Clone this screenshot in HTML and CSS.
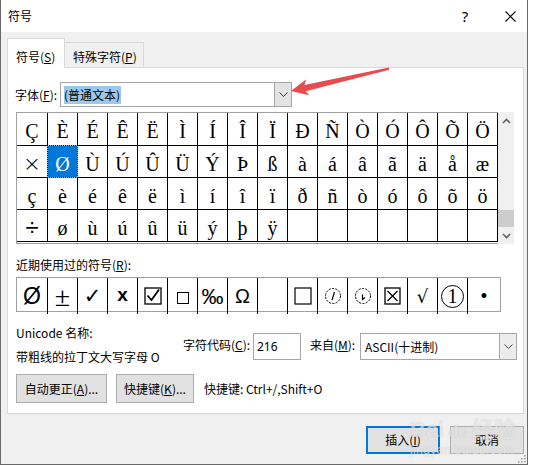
FILE: index.html
```html
<!DOCTYPE html>
<html lang="zh-CN">
<head>
<meta charset="utf-8">
<title>符号</title>
<link rel="stylesheet" href="styles.css">
</head>
<body>
<div class="window">
  <div class="titlebar">
    <span class="title">符号</span>
    <span class="tb-help">?</span>
    <span class="tb-close"><svg width="11" height="11" viewBox="0 0 11 11"><path d="M0.5 0.5L10.5 10.5M10.5 0.5L0.5 10.5" stroke="#000" stroke-width="1.1" fill="none"/></svg></span>
  </div>
  <div class="tabs">
    <div class="tab active">符号(<u>S</u>)</div>
    <div class="tab">特殊字符(<u>P</u>)</div>
  </div>
  <div class="panel">
    <div class="font-row">
      <span class="font-label">字体(<u>F</u>):</span>
      <div class="combo font-combo">
        <span class="combo-text"><span class="hl">(普通文本)</span></span>
        <span class="combo-btn dark"><svg width="9" height="5" viewBox="0 0 9 5"><path d="M0.5 0.5L4.5 4.5L8.5 0.5" stroke="#333" fill="none"/></svg></span>
      </div>
    </div>

    <div class="charmap">
      <div class="cells">
        <div class="cell">Ç</div><div class="cell">È</div><div class="cell">É</div><div class="cell">Ê</div><div class="cell">Ë</div><div class="cell">Ì</div><div class="cell">Í</div><div class="cell">Î</div><div class="cell">Ï</div><div class="cell">Ð</div><div class="cell">Ñ</div><div class="cell">Ò</div><div class="cell">Ó</div><div class="cell">Ô</div><div class="cell">Õ</div><div class="cell">Ö</div>
        <div class="cell times">×</div><div class="cell sel">Ø</div><div class="cell">Ù</div><div class="cell">Ú</div><div class="cell">Û</div><div class="cell">Ü</div><div class="cell">Ý</div><div class="cell">Þ</div><div class="cell">ß</div><div class="cell">à</div><div class="cell">á</div><div class="cell">â</div><div class="cell">ã</div><div class="cell">ä</div><div class="cell">å</div><div class="cell">æ</div>
        <div class="cell">ç</div><div class="cell">è</div><div class="cell">é</div><div class="cell">ê</div><div class="cell">ë</div><div class="cell">ì</div><div class="cell">í</div><div class="cell">î</div><div class="cell">ï</div><div class="cell">ð</div><div class="cell">ñ</div><div class="cell">ò</div><div class="cell">ó</div><div class="cell">ô</div><div class="cell">õ</div><div class="cell">ö</div>
        <div class="cell divide">÷</div><div class="cell">ø</div><div class="cell">ù</div><div class="cell">ú</div><div class="cell">û</div><div class="cell">ü</div><div class="cell">ý</div><div class="cell">þ</div><div class="cell">ÿ</div><div class="cell"></div><div class="cell"></div><div class="cell"></div><div class="cell"></div><div class="cell"></div><div class="cell"></div><div class="cell"></div>
      </div>
      <div class="vscroll">
        <div class="sb-btn"><svg width="9" height="6" viewBox="0 0 9 6"><path d="M1 5L4.5 1.5L8 5" stroke="#606060" stroke-width="1.6" fill="none"/></svg></div>
        <div class="sb-track"><div class="sb-thumb"></div></div>
        <div class="sb-btn"><svg width="9" height="6" viewBox="0 0 9 6"><path d="M1 1L4.5 4.5L8 1" stroke="#606060" stroke-width="1.6" fill="none"/></svg></div>
      </div>
    </div>

    <div class="recent-label">近期使用过的符号(<u>R</u>):</div>
    <div class="recent">
      <div class="rc r-oslash">Ø</div>
      <div class="rc r-pm">±</div>
      <div class="rc r-check">✓</div>
      <div class="rc r-x">x</div>
      <div class="rc"><svg width="18" height="18" viewBox="0 0 18 18"><rect x="1" y="1" width="16" height="16" fill="none" stroke="#000" stroke-width="1.3"/><path d="M3.5 8.5L7.5 13L15 2.5" stroke="#000" stroke-width="1.8" fill="none"/></svg></div>
      <div class="rc"><svg width="12" height="12" viewBox="0 0 12 12" class="low"><rect x="0.5" y="0.5" width="11" height="11" fill="none" stroke="#000" stroke-width="1"/></svg></div>
      <div class="rc r-permil">‰</div>
      <div class="rc r-omega">Ω</div>
      <div class="rc"></div>
      <div class="rc"><svg width="18" height="18" viewBox="0 0 18 18"><rect x="1" y="1" width="16" height="16" fill="none" stroke="#000" stroke-width="1.2"/></svg></div>
      <div class="rc"><svg width="18" height="18" viewBox="0 0 18 18"><circle cx="9" cy="9" r="7.5" fill="none" stroke="#000" stroke-width="1" stroke-dasharray="2.2 1.2"/><path d="M8 13L10.5 5" stroke="#000" stroke-width="1.2" fill="none"/></svg></div>
      <div class="rc"><svg width="18" height="18" viewBox="0 0 18 18"><circle cx="9" cy="9" r="7.5" fill="none" stroke="#000" stroke-width="1" stroke-dasharray="2.2 1.2"/><path d="M8.5 7.5V12.5L11 10.5" stroke="#000" stroke-width="1.2" fill="none"/></svg></div>
      <div class="rc"><svg width="17" height="18" viewBox="0 0 17 18"><rect x="1" y="1" width="15" height="16" fill="none" stroke="#000" stroke-width="1.3"/><path d="M3.5 4L13.5 14M13.5 4L3.5 14" stroke="#000" stroke-width="1.2" fill="none"/></svg></div>
      <div class="rc r-sqrt">√</div>
      <div class="rc"><span class="circled">1</span></div>
      <div class="rc r-bullet">•</div>
    </div>

    <div class="info">
      <div class="info-left">
        <div class="line">Unicode 名称:</div>
        <div class="line second">带粗线的拉丁文大写字母 O</div>
      </div>
      <span class="info-label code-label">字符代码(<u>C</u>):</span>
      <div class="textbox">216</div>
      <span class="info-label from-label">来自(<u>M</u>):</span>
      <div class="combo from-combo">
        <span class="combo-text">ASCII(十进制)</span>
        <span class="combo-btn"><svg width="9" height="5" viewBox="0 0 9 5"><path d="M0.5 0.5L4.5 4.5L8.5 0.5" stroke="#444" fill="none"/></svg></span>
      </div>
    </div>

    <div class="btn-row">
      <div class="btn autocorrect">自动更正(<u>A</u>)...</div>
      <div class="btn shortcut">快捷键(<u>K</u>)...</div>
      <span class="shortcut-text">快捷键: Ctrl+/,Shift+O</span>
    </div>
  </div>
  <div class="footer">
    <div class="btn default">插入(<u>I</u>)</div>
    <div class="btn">取消</div>
  </div>
  <div class="watermark"><span class="wm-big">Bai<span class="wm-du">du</span>经验</span><span class="wm-small">jingyan.baidu.com</span></div>
  <svg class="grip" width="8" height="8" viewBox="0 0 8 8"><rect x="6" y="0" width="1.5" height="1.5" fill="#a0a0a0"/><rect x="3" y="3" width="1.5" height="1.5" fill="#a0a0a0"/><rect x="6" y="3" width="1.5" height="1.5" fill="#a0a0a0"/><rect x="0" y="6" width="1.5" height="1.5" fill="#a0a0a0"/><rect x="3" y="6" width="1.5" height="1.5" fill="#a0a0a0"/><rect x="6" y="6" width="1.5" height="1.5" fill="#a0a0a0"/></svg>
</div>
<svg class="arrow" width="533" height="466" viewBox="0 0 533 466"><polygon points="291,91 306,79.5 304.5,85 388.8,67.6 389.2,69.8 305.6,91.2 309.2,95.3" fill="#e84a4e"/></svg>
</body>
</html>
```
FILE: styles.css
```css
* { box-sizing: border-box; }
html, body { margin: 0; padding: 0; }
body {
  width: 533px;
  height: 466px;
  overflow: hidden;
  background: #fff;
  position: relative;
  font-family: "Noto Sans CJK SC", "Noto Sans", sans-serif;
  font-size: 12px;
  line-height: 16px;
  color: #000;
}
u { text-decoration: underline; text-underline-offset: 1px; }

.window {
  width: 528px;
  height: 465px;
  background: #f0f0f0;
  border: 1px solid #6a6a6a;
  border-top: none;
  display: flex;
  flex-direction: column;
  position: relative;
}

.titlebar {
  height: 32px;
  background: #fff;
  display: flex;
  align-items: center;
  padding: 0 7px 0 7px;
}
.title { flex: 1; }
.tb-help {
  width: 20px;
  text-align: center;
  font-family: "Noto Sans", sans-serif;
  font-size: 15px;
  margin-right: 25px;
}
.tb-close {
  width: 20px;
  height: 11px;
  display: flex;
  justify-content: center;
}
.tb-close svg { display: block; }

.tabs {
  display: flex;
  align-items: flex-end;
  margin-top: 6px;
  padding-left: 6px;
}
.tab {
  border: 1px solid #d9d9d9;
  border-bottom: none;
  white-space: nowrap;
}
.tab.active {
  height: 30px;
  width: 58px;
  padding: 10px 0 0 8px;
  background: #fff;
  margin-bottom: -1px;
  position: relative;
  z-index: 1;
}
.tab:not(.active) {
  height: 25px;
  width: 80px;
  padding: 6px 0 0 8px;
  margin-left: -1px;
  background: #f0f0f0;
}

.panel {
  margin-left: 6px;
  width: 517px;
  height: 347px;
  background: #fff;
  border: 1px solid #d9d9d9;
  padding: 14px 0 0 8px;
}

.font-row {
  display: flex;
  align-items: center;
  height: 25px;
}
.font-label {
  margin-left: -1px;
  width: 45px;
}
.combo {
  display: flex;
  border: 1px solid #a6a6a6;
  background: #fff;
}
.font-combo { width: 232px; height: 25px; }
.combo-text {
  flex: 1;
  display: flex;
  align-items: center;
  padding-left: 3px;
  white-space: nowrap;
}
.hl {
  background: #99c9ef;
  line-height: 18px;
  padding: 0 1px 0 0;
}
.combo-btn {
  width: 17px;
  display: flex;
  align-items: center;
  justify-content: center;
  border-left: 1px solid #a6a6a6;
  background: #ececec;
}
.combo-btn.dark { background: #e3e3e3; }

.charmap {
  display: flex;
  margin-top: 5px;
  height: 132px;
}
.cells {
  display: grid;
  grid-template-columns: 31px repeat(15, 30px);
  grid-template-rows: 33px repeat(3, 32px);
  border-top: 1px solid #a0a0a0;
  border-left: 1px solid #a0a0a0;
  border-bottom: 1px solid #a0a0a0;
  padding-bottom: 1px;
  background: #fff;
}
.cell {
  border-right: 1px solid #000;
  border-bottom: 1px solid #000;
  text-align: center;
  font-family: "Liberation Serif", serif;
  font-size: 20px;
  line-height: 28px;
  padding-top: 4px;
}
.cell.times { font-family: "DejaVu Sans", sans-serif; font-weight: 200; font-size: 22px; }
.cell.divide { font-family: "Liberation Sans", sans-serif; font-size: 24px; }
.cell.sel {
  background: #0078d7;
  color: #fff;
  position: relative;
}
.cell.sel::before {
  content: "";
  position: absolute;
  inset: -1px;
  border: 1px solid #f0a040;
}
.cell.sel::after {
  content: "";
  position: absolute;
  inset: -1px;
  border: 1px dotted #111;
}

.vscroll {
  width: 16px;
  background: #f0f0f0;
  display: flex;
  flex-direction: column;
}
.sb-btn {
  height: 17px;
  display: flex;
  align-items: center;
  justify-content: center;
}
.sb-track {
  flex: 1;
  display: flex;
  flex-direction: column;
  justify-content: flex-end;
}
.sb-thumb { height: 17px; background: #cdcdcd; }

.recent-label { margin-top: 13px; }
.recent {
  margin-top: 4px;
  width: 485px;
  height: 35px;
  border: 1px solid #a0a0a0;
  display: grid;
  grid-template-columns: 31px repeat(14, 30px) 32px;
}
.rc {
  border-right: 1px solid #000;
  display: flex;
  align-items: center;
  justify-content: center;
  line-height: 33px;
}
.rc:last-child { border-right: none; }
.rc svg { display: block; }
.rc svg.low { margin-top: 4px; }
.r-oslash { font-family: "Liberation Sans", sans-serif; font-size: 23px; }
.r-pm { font-family: "Liberation Serif", serif; font-size: 28px; font-weight: 100; }
.r-check { font-family: "DejaVu Sans", sans-serif; font-size: 21px; }
.r-x { font-family: "Liberation Sans", sans-serif; font-size: 19px; font-weight: bold; padding-bottom: 3px; }
.r-permil { font-family: "Liberation Sans", sans-serif; font-size: 22px; }
.r-omega { font-family: "Liberation Sans", sans-serif; font-size: 20px; }
.r-sqrt { font-family: "DejaVu Sans", sans-serif; font-size: 18px; }
.r-bullet { font-family: "Liberation Sans", sans-serif; font-size: 18px; }
.circled {
  width: 23px;
  height: 23px;
  border: 1px solid #000;
  border-radius: 50%;
  display: flex;
  align-items: center;
  justify-content: center;
  font-family: "Liberation Serif", serif;
  font-size: 20px;
  line-height: 20px;
}

.info {
  display: flex;
  align-items: flex-start;
  margin-top: 13px;
  height: 40px;
}
.info-left { width: 167px; }
.info-left .second { margin-top: 8px; }
.info-label {
  margin-top: 7px;
  line-height: 26px;
  white-space: nowrap;
}
.code-label { width: 70px; }
.textbox {
  margin-top: 8px;
  width: 48px;
  height: 27px;
  border: 1px solid #a6a6a6;
  background: #fff;
  padding-left: 3px;
  line-height: 25px;
  font-family: "Noto Sans", sans-serif;
}
.from-label { margin-left: 9px; width: 50px; }
.from-combo {
  margin-top: 8px;
  width: 157px;
  height: 27px;
}
.from-combo .combo-text { padding-left: 4px; }

.btn-row {
  display: flex;
  align-items: center;
  margin-top: 9px;
  height: 29px;
}
.btn {
  height: 29px;
  border: 1px solid #adadad;
  background: #e1e1e1;
  display: flex;
  align-items: center;
  justify-content: center;
  white-space: nowrap;
}
.autocorrect { width: 91px; }
.shortcut { width: 78px; margin-left: 9px; }
.shortcut-text { margin-left: 10px; }

.footer {
  display: flex;
  justify-content: flex-end;
  gap: 10px;
  margin-top: 12px;
  padding-right: 3px;
}
.footer .btn { width: 74px; height: 28px; }
.footer .btn.default { border: 2px solid #0078d7; }

.watermark {
  position: absolute;
  left: 409px;
  top: 418px;
  display: flex;
  flex-direction: column;
  color: rgba(255, 255, 255, 0.55);
  text-shadow: 0 0 1px rgba(120, 120, 120, 0.35);
  pointer-events: none;
}
.wm-big {
  font-family: "Liberation Sans", "Noto Sans CJK SC", sans-serif;
  font-size: 22px;
  font-weight: bold;
  line-height: 24px;
}
.wm-du { font-size: 16px; margin: 0 4px; }
.wm-small {
  font-family: "Liberation Sans", sans-serif;
  font-size: 12px;
  line-height: 12px;
  letter-spacing: 0.4px;
}
.grip { position: absolute; right: 1px; bottom: 1px; }

.arrow { position: absolute; left: 0; top: 0; pointer-events: none; }
```
